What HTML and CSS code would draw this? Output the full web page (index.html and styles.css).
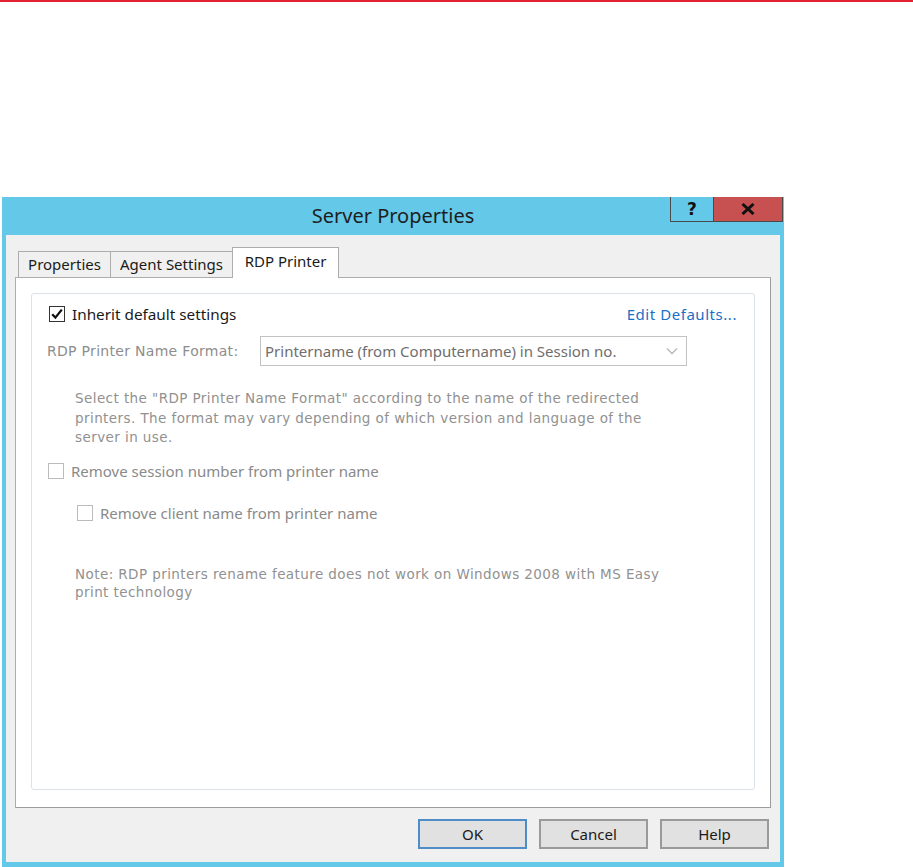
FILE: index.html
```html
<!DOCTYPE html>
<html>
<head>
<meta charset="utf-8">
<link rel="stylesheet" href="styles.css">
</head>
<body>
<div class="topline"></div>
<div class="window">
  <div class="titlebar">
    <span class="title">Server Properties</span>
    <div class="caption-buttons">
      <div class="cbtn cbtn-help">?</div>
      <div class="cbtn cbtn-close">
        <svg width="14" height="12" viewBox="0 0 14 12"><path d="M1.5 1 L12.5 11 M12.5 1 L1.5 11" stroke="#111" stroke-width="3" fill="none"/></svg>
      </div>
    </div>
  </div>
  <div class="client">
    <div class="tabs">
      <div class="tab tab-props">Properties</div>
      <div class="tab tab-agent">Agent Settings</div>
      <div class="tab tab-rdp active">RDP Printer</div>
    </div>
    <div class="panel">
      <div class="group">
        <div class="row-inherit">
          <label class="check-row">
            <span class="checkbox checked">
              <svg width="14" height="14" viewBox="0 0 14 14"><path d="M2.2 7.2 L5.4 10.6 L11.8 2.6" stroke="#111" stroke-width="2.3" fill="none"/></svg>
            </span>
            <span class="check-label">Inherit default settings</span>
          </label>
          <span class="link">Edit Defaults...</span>
        </div>
        <div class="row-format">
          <span class="format-label">RDP Printer Name Format:</span>
          <div class="combo">
            <span class="combo-text">Printername (from Computername) in Session no.</span>
            <svg width="12" height="8" viewBox="0 0 12 8"><path d="M1 1.5 L6 6.5 L11 1.5" stroke="#b8b8b8" stroke-width="1.3" fill="none"/></svg>
          </div>
        </div>
        <p class="desc">Select the "RDP Printer Name Format" according to the name of the redirected<br>printers. The format may vary depending of which version and language of the<br>server in use.</p>
        <label class="check-row disabled row-session">
          <span class="checkbox"></span>
          <span class="check-label">Remove session number from printer name</span>
        </label>
        <label class="check-row disabled row-client">
          <span class="checkbox"></span>
          <span class="check-label">Remove client name from printer name</span>
        </label>
        <p class="note">Note: RDP printers rename feature does not work on Windows 2008 with MS Easy<br>print technology</p>
      </div>
    </div>
    <div class="buttons">
      <div class="btn btn-default">OK</div>
      <div class="btn">Cancel</div>
      <div class="btn">Help</div>
    </div>
  </div>
</div>
</body>
</html>
```

FILE: styles.css
```css
* { box-sizing: border-box; }
body {
  margin: 0;
  background: #ffffff;
  font-family: "Noto Sans", "Open Sans", sans-serif;
  color: #1a1a1a;
}
.topline {
  height: 2px;
  background: #e2202f;
}
.window {
  margin: 195px 0 0 2px;
  width: 782px;
  background: #64c8e8;
  padding: 0 4px 5px 4px;
}
.titlebar {
  height: 38px;
  position: relative;
  display: flex;
  align-items: center;
  justify-content: center;
}
.title {
  font-size: 20px;
  color: #1e1e1e;
  margin-top: -1px;
}
.caption-buttons {
  position: absolute;
  top: 0;
  right: -3px;
  display: flex;
}
.cbtn {
  height: 25px;
  border: 1px solid #4a4a4a;
  border-top: none;
  display: flex;
  align-items: center;
  justify-content: center;
}
.cbtn-help {
  width: 43px;
  border-right: none;
  font-weight: bold;
  font-size: 17px;
  font-family: "DejaVu Sans", sans-serif;
  color: #111;
}
.cbtn-close {
  width: 70px;
  background: #c75050;
}
.client {
  background: #f0f0f0;
  height: 627px;
  padding: 12px 9px 0 9px;
}
.tabs {
  display: flex;
  align-items: flex-end;
  height: 30px;
  padding-left: 3px;
}
.tab {
  height: 26px;
  border: 1px solid #adadad;
  border-bottom: none;
  background: #f0f0f0;
  font-size: 15px;
  display: flex;
  align-items: center;
  justify-content: center;
  margin-right: -1px;
  padding-bottom: 1px;
}
.tab-props { width: 93px; }
.tab-agent { width: 123px; }
.tab-rdp { width: 107px; }
.tab.active {
  height: 31px;
  background: #ffffff;
  margin-bottom: -1px;
  position: relative;
  z-index: 1;
  padding-bottom: 4px;
}
.panel {
  background: #ffffff;
  border: 1px solid #adadad;
  border-right-color: #9c9c9c;
  border-bottom-color: #9c9c9c;
  height: 531px;
  padding: 15px;
}
.group {
  height: 497px;
  border: 1px solid #dde2e8;
  border-radius: 3px;
  padding: 11px 17px 0 15px;
}
.row-inherit {
  display: flex;
  justify-content: space-between;
  align-items: center;
  height: 17px;
}
.check-row {
  display: flex;
  align-items: center;
  gap: 7px;
  font-size: 15px;
}
.row-inherit .check-row { margin-left: 2px; font-size: 15.3px; }
.checkbox {
  width: 16px;
  height: 16px;
  border: 1px solid #333333;
  background: #ffffff;
  display: flex;
  align-items: center;
  justify-content: center;
}
.disabled .checkbox {
  border-color: #bcbcbc;
}
.disabled .check-label {
  color: #8a8a8a;
}
.link {
  color: #1a6fc4;
  font-size: 15px;
  letter-spacing: 0.55px;
}
.row-format {
  display: flex;
  align-items: center;
  margin-top: 14px;
}
.format-label {
  width: 213px;
  font-family: "DejaVu Sans", sans-serif;
  font-size: 14px;
  letter-spacing: 0.3px;
  color: #8d8d8d;
}
.combo {
  width: 427px;
  height: 30px;
  border: 1px solid #c3c3c3;
  display: flex;
  align-items: center;
  justify-content: space-between;
  padding: 0 8px 0 4px;
}
.combo-text {
  font-size: 15px;
  color: #6e6e6e;
}
.desc, .note {
  margin: 0;
  font-family: "DejaVu Sans", sans-serif;
  font-size: 13.5px;
  letter-spacing: 0.42px;
  color: #919191;
  white-space: nowrap;
}
.desc {
  margin: 23px 0 0 28px;
  line-height: 19.5px;
}
.row-session {
  margin-top: 13px;
  margin-left: 1px;
}
.row-client {
  margin-top: 22px;
  margin-left: 30px;
}
.note {
  margin: 42px 0 0 28px;
  line-height: 18px;
}
.buttons {
  display: flex;
  justify-content: flex-end;
  gap: 12px;
  margin-top: 11px;
  padding-right: 2px;
}
.btn {
  width: 109px;
  height: 30px;
  border: 2px solid #9a9a9a;
  background: #e1e1e1;
  display: flex;
  align-items: center;
  justify-content: center;
  font-size: 15px;
  color: #1a1a1a;
}
.btn-default {
  border-color: #4f8dc8;
}
```
